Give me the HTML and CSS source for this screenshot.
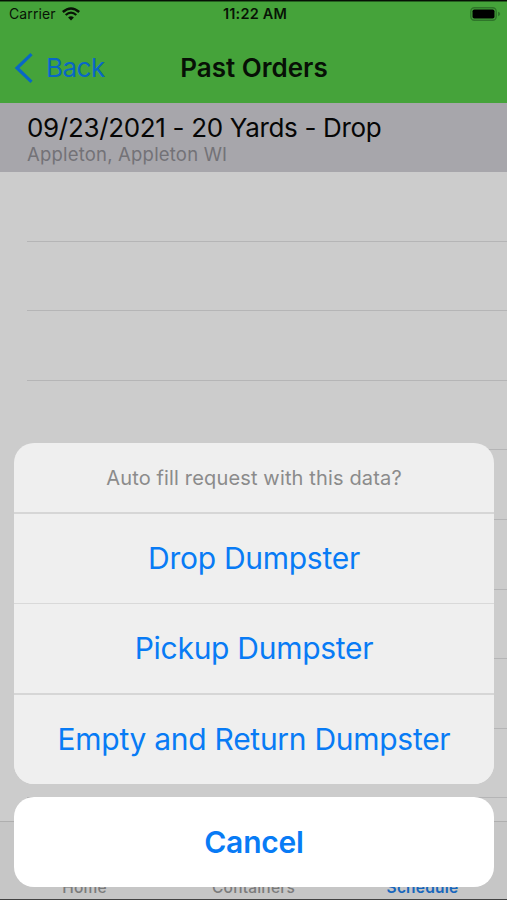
FILE: index.html
```
<!DOCTYPE html>
<html lang="en">
<head>
    <meta charset="UTF-8">
    <title>Past Orders</title>
    <link rel="stylesheet" href="styles.css">
</head>
<body>
<div class="phone">
    <header class="header">
        <div class="statusBar">
            <div class="carrier">
                <span>Carrier</span>
                <svg class="wifi" width="18" height="14" viewBox="0 0 18 14">
                    <path d="M0.8 5Q9 -2 17.2 5" fill="none" stroke="#081306" stroke-width="2.6"/>
                    <path d="M3.7 8Q9 3.3 14.3 8" fill="none" stroke="#081306" stroke-width="2.3"/>
                    <path d="M6.1 10.4Q9 8 11.9 10.4L9 13.5Z" fill="#081306"/>
                </svg>
            </div>
            <span class="time">11:22 AM</span>
            <svg class="battery" width="31" height="14" viewBox="0 0 31 14">
                <rect x="0.8" y="0.8" width="25.4" height="12.4" rx="3.6" fill="none" stroke="#2f752a" stroke-width="1.4"/>
                <rect x="2.5" y="2.5" width="22" height="9" rx="1.8" fill="#000"/>
                <path d="M28 4.8Q30.2 5.4 30.2 7Q30.2 8.6 28 9.2Z" fill="#2f752a"/>
            </svg>
        </div>
        <nav class="navBar">
            <a class="back">
                <svg width="20" height="32" viewBox="0 0 20 32">
                    <path d="M17.5 2.2L3 16L17.5 29.8" fill="none" stroke="#0867c6" stroke-width="3.2"/>
                </svg>
                <span>Back</span>
            </a>
            <h1 class="title">Past Orders</h1>
        </nav>
    </header>

    <main class="orders">
        <div class="order">
            <div class="orderName">09/23/2021 - 20 Yards - Drop</div>
            <div class="orderPlace">Appleton, Appleton WI</div>
        </div>
        <div class="row"></div>
        <div class="row"></div>
        <div class="row"></div>
        <div class="row"></div>
        <div class="row"></div>
        <div class="row"></div>
        <div class="row"></div>
        <div class="row"></div>
        <div class="row"></div>
    </main>

    <footer class="tabBar">
        <span class="tab">Home</span>
        <span class="tab">Containers</span>
        <span class="tab active">Schedule</span>
    </footer>

    <div class="actionSheet">
        <div class="actions">
            <div class="message">Auto fill request with this data?</div>
            <button class="action">Drop Dumpster</button>
            <button class="action light">Pickup Dumpster</button>
            <button class="action">Empty and Return Dumpster</button>
        </div>
        <button class="cancel">Cancel</button>
    </div>
</div>
</body>
</html>
```
FILE: styles.css
```
*{
    box-sizing: border-box;
}
body{
    margin: 0;
    font-family: Inter, "Liberation Sans", sans-serif;
}
.phone{
    position: relative;
    display: flex;
    flex-direction: column;
    height: 900px;
    overflow: hidden;
    background-color: #cccccc;
    border-top: 1px solid #071006;
    border-bottom: 1px solid #424242;
}
.header{
    flex: none;
    height: 102px;
    background-color: #45a33a;
    border-top: 1px solid #256020;
}
.statusBar{
    display: grid;
    grid-template-columns: 1fr auto 1fr;
    align-items: center;
    height: 23px;
    padding: 0 6px 0 9px;
    color: #081306;
    font-size: 14px;
}
.carrier{
    display: flex;
    align-items: center;
    gap: 6px;
    letter-spacing: 0.1px;
}
.time{
    font-size: 14.5px;
    font-weight: 600;
    letter-spacing: 0.2px;
}
.battery{
    justify-self: end;
}
.navBar{
    display: grid;
    grid-template-columns: 1fr auto 1fr;
    align-items: center;
    height: 85px;
    padding: 0 13px 0 14px;
}
.back{
    display: flex;
    align-items: center;
    gap: 12px;
    color: #0867c6;
    font-size: 26px;
    letter-spacing: -0.5px;
}
.title{
    margin: 0;
    color: #071006;
    font-size: 26px;
    font-weight: 600;
}
.orders{
    flex: 1;
    min-height: 0;
    overflow: hidden;
}
.order{
    height: 69px;
    padding: 9px 27px 0;
    background-color: #a7a6ab;
}
.orderName{
    color: #060606;
    font-size: 26px;
    line-height: 31px;
    letter-spacing: -0.33px;
}
.orderPlace{
    color: #737277;
    font-size: 18.5px;
    line-height: 23px;
    letter-spacing: 0.2px;
}
.row{
    height: 69.6px;
    margin-left: 27px;
    border-bottom: 1px solid #b5b5b6;
}
.tabBar{
    flex: none;
    display: grid;
    grid-template-columns: repeat(3, 1fr);
    align-items: end;
    height: 78px;
    padding-bottom: 2px;
    background-color: #c6c6c6;
    border-top: 1px solid #afafaf;
}
.tab{
    color: #7b7b7b;
    font-size: 15.5px;
    font-weight: 500;
    line-height: 18px;
    letter-spacing: 0.2px;
    text-align: center;
}
.active{
    color: #1766bd;
    font-weight: 600;
}
.actionSheet{
    position: absolute;
    left: 14px;
    right: 13px;
    bottom: 12px;
    display: flex;
    flex-direction: column;
    gap: 13px;
}
.actions{
    overflow: hidden;
    background-color: #efefef;
    border-radius: 20px;
}
.message{
    display: flex;
    align-items: center;
    justify-content: center;
    height: 69px;
    padding-top: 1px;
    color: #8b8b8b;
    font-size: 20px;
    letter-spacing: 0.15px;
}
.action, .cancel{
    display: flex;
    align-items: center;
    justify-content: center;
    width: 100%;
    border: none;
    padding: 0;
    color: #087bf5;
    font-family: inherit;
    font-size: 30px;
    letter-spacing: -0.28px;
}
.action{
    height: 90.6px;
    padding-bottom: 1px;
    background-color: #efefef;
    border-top: 2px solid #d6d6d6;
}
.light{
    border-top: 1px solid #d9d9d9;
}
.cancel{
    height: 90px;
    background-color: #ffffff;
    border-radius: 20px;
    font-weight: 600;
    letter-spacing: -0.2px;
}
```
